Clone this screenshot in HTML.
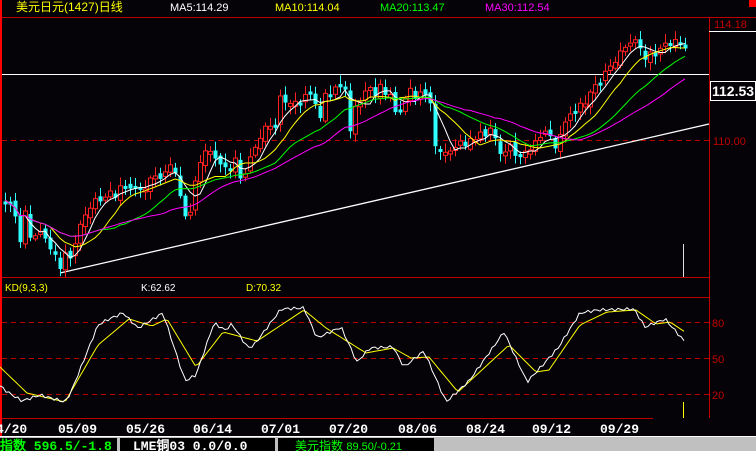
<!DOCTYPE html>
<html><head><meta charset="utf-8">
<style>
html,body{margin:0;padding:0;background:#050308;width:756px;height:451px;overflow:hidden}
svg{display:block}
text{font-family:"Liberation Sans","WenQuanYi Zen Hei",sans-serif}
.mono{font-family:"Liberation Mono","WenQuanYi Zen Hei",monospace;font-weight:bold}
</style></head><body>
<svg id="s" width="756" height="451" viewBox="0 0 756 451" xmlns="http://www.w3.org/2000/svg">
<rect width="756" height="451" fill="#050308"/>
<rect x="0" y="0" width="2" height="436" fill="#ff0000"/>
<text x="16" y="11" fill="#ffff00" font-size="12">美元日元(1427)日线</text>
<text x="170" y="11" fill="#ffffff" font-size="11">MA5:114.29</text>
<text x="275" y="11" fill="#ffff00" font-size="11">MA10:114.04</text>
<text x="380" y="11" fill="#00ff00" font-size="11">MA20:113.47</text>
<text x="485" y="11" fill="#ff00ff" font-size="11">MA30:112.54</text>
<rect x="749" y="0" width="7" height="7" fill="#ff0000"/>
<line x1="2" y1="17.5" x2="756" y2="17.5" stroke="#c00000"/>
<line x1="709.5" y1="17" x2="709.5" y2="418" stroke="#c00000"/>
<text x="714" y="28" fill="#c00000" font-size="11">114.18</text>
<line x1="709" y1="31.5" x2="756" y2="31.5" stroke="#fff"/>
<line x1="2" y1="74.5" x2="709" y2="74.5" stroke="#fff"/>
<rect x="710.5" y="81.5" width="45" height="19" fill="none" stroke="#fff"/>
<text x="712" y="96" fill="#fff" font-size="14" font-weight="bold">112.53</text>
<line x1="2" y1="140.5" x2="709" y2="140.5" stroke="#c00000" stroke-dasharray="5,4"/>
<text x="713" y="145" fill="#c00000" font-size="11">110.00</text>
<line x1="60" y1="273" x2="709" y2="124" stroke="#fff" stroke-width="1.3"/>
<line x1="683.5" y1="244" x2="683.5" y2="278" stroke="#ddd"/>
<g id="candles"></g>
<g id="mas"></g>
<line x1="2" y1="277.5" x2="709" y2="277.5" stroke="#c00000"/>
<line x1="2" y1="297.5" x2="709" y2="297.5" stroke="#c00000"/>
<text x="5" y="291" fill="#ffff00" font-size="10">KD(9,3,3)</text>
<text x="141" y="291" fill="#fff" font-size="10">K:62.62</text>
<text x="246" y="291" fill="#ffff00" font-size="10">D:70.32</text>
<line x1="2" y1="322.5" x2="709" y2="322.5" stroke="#c00000" stroke-dasharray="5,4"/>
<line x1="2" y1="358.5" x2="709" y2="358.5" stroke="#c00000" stroke-dasharray="5,4"/>
<line x1="2" y1="394.5" x2="709" y2="394.5" stroke="#c00000" stroke-dasharray="5,4"/>
<text x="712" y="327" fill="#c00000" font-size="11">80</text>
<text x="712" y="363" fill="#c00000" font-size="11">50</text>
<text x="712" y="399" fill="#c00000" font-size="11">20</text>
<line x1="683.5" y1="402" x2="683.5" y2="418" stroke="#ffff00"/>
<polyline id="kd" fill="none" stroke="#ffff00" stroke-width="1"/>
<polyline id="kk" fill="none" stroke="#fff" stroke-width="1"/>
<line x1="2" y1="418.5" x2="653" y2="418.5" stroke="#c00000"/>
<g fill="#fff" font-size="13">
<text x="-4" y="433" class="mono">4/20</text>
<text x="58" y="433" class="mono">05/09</text>
<text x="126" y="433" class="mono">05/26</text>
<text x="193" y="433" class="mono">06/14</text>
<text x="261" y="433" class="mono">07/01</text>
<text x="329" y="433" class="mono">07/20</text>
<text x="398" y="433" class="mono">08/06</text>
<text x="466" y="433" class="mono">08/24</text>
<text x="532" y="433" class="mono">09/12</text>
<text x="600" y="433" class="mono">09/29</text>
</g>
<rect x="0" y="436" width="756" height="15" fill="#c0c0c0"/>
<line x1="0" y1="436.5" x2="756" y2="436.5" stroke="#fff"/>
<rect x="0" y="438" width="117" height="13" fill="#000"/>
<rect x="120" y="438" width="155" height="13" fill="#000"/>
<rect x="278" y="438" width="156" height="13" fill="#000"/>
<text x="0" y="450" fill="#00ff00" font-size="13" class="mono">指数 596.5/-1.8</text>
<text x="133" y="450" fill="#fff" font-size="13" class="mono">LME铜03  0.0/0.0</text>
<text x="295" y="450" fill="#00ff00" font-size="12">美元指数 <tspan font-size="11">89.50/-0.21</tspan></text>
</svg>
<script>
(function(){
var P=[[5,200],[15,215],[20,240],[25,215],[30,235],[45,235],[50,250],[60,265],[65,255],[70,260],[75,240],[85,215],[90,205],[100,200],[105,195],[115,195],[120,185],[125,190],[130,185],[140,190],[150,180],[160,175],[165,175],[170,165],[175,170],[180,200],[185,215],[190,210],[195,185],[200,160],[205,150],[210,155],[215,155],[220,165],[225,170],[230,165],[235,160],[240,180],[250,160],[260,135],[265,130],[270,125],[275,125],[280,100],[285,100],[295,105],[305,95],[315,100],[320,120],[325,95],[335,90],[345,85],[350,135],[355,105],[360,100],[365,95],[370,85],[375,95],[380,88],[390,95],[395,115],[405,100],[410,90],[415,95],[425,95],[430,100],[435,150],[440,150],[445,150],[450,155],[455,145],[460,140],[465,150],[470,135],[475,140],[480,135],[490,130],[495,140],[500,150],[505,155],[510,145],[520,160],[525,150],[535,145],[540,135],[545,130],[550,140],[555,145],[560,135],[565,125],[570,110],[575,115],[580,105],[590,95],[595,85],[600,80],[605,75],[610,65],[615,60],[620,55],[625,45],[630,42],[640,45],[645,60],[650,55],[660,50],[665,45],[670,40],[680,45],[685,45]];
function interp(A,x){for(var i=1;i<A.length;i++){if(x<=A[i][0]){var a=A[i-1],b=A[i];return a[1]+(b[1]-a[1])*(x-a[0])/(b[0]-a[0]);}}return A[A.length-1][1];}
var NS="http://www.w3.org/2000/svg";
function el(t,at,p){var e=document.createElementNS(NS,t);for(var k in at)e.setAttribute(k,at[k]);p.appendChild(e);return e;}
var cg=document.getElementById('candles');
var closes=[],xs=[];var prev=200;
for(var x=5;x<=685;x+=5){var base=interp(P,x);var c=base+Math.sin(x*1.7)*4;closes.push(base);xs.push(x);
 var o=prev+Math.cos(x*2.3)*3;var tp=Math.min(o,c),bt=Math.max(o,c);if(bt-tp<3)bt=tp+3;
 var hi=tp-2-Math.abs(Math.sin(x*0.9))*7,lo=bt+2+Math.abs(Math.cos(x*1.3))*6;
 var up=c<o;var col=up?'#ff2020':'#30ffff';
 el('line',{x1:x+.5,y1:hi,x2:x+.5,y2:lo,stroke:col},cg);
 if(up)el('rect',{x:x-1.5,y:tp,width:4,height:bt-tp,fill:'#050308',stroke:col,'stroke-width':1},cg);
 else el('rect',{x:x-1.5,y:tp,width:4,height:bt-tp,fill:col},cg);
 prev=c;}
var mg=document.getElementById('mas');
[[5,'#fff'],[10,'#ffff00'],[20,'#00ff00'],[30,'#ff00ff']].forEach(function(m){var pts=[];
 for(var i=0;i<closes.length;i++){var s=0,n=0;for(var j=Math.max(0,i-m[0]+1);j<=i;j++){s+=closes[j];n++;}
 var v=s/n;pts.push(xs[i]+','+v.toFixed(1));}
 el('polyline',{points:pts.join(' '),fill:'none',stroke:m[1]},mg);});
var K=[[0,386],[9,393],[22,401],[40,395],[65,402],[71,392],[98,325],[107,320],[123,313],[138,328],[163,313],[185,381],[196,375],[214,323],[225,330],[232,324],[248,348],[254,345],[281,309],[304,308],[317,338],[341,327],[357,362],[370,348],[393,347],[404,367],[424,351],[446,402],[469,381],[504,332],[527,382],[540,368],[558,348],[580,313],[598,310],[634,309],[645,327],[665,319],[685,342]];
var D=[[0,367],[27,393],[65,402],[98,345],[129,319],[152,326],[167,319],[196,367],[223,332],[257,341],[304,310],[326,328],[366,353],[393,348],[411,358],[429,357],[458,392],[509,345],[536,372],[549,370],[580,325],[607,312],[636,310],[656,324],[670,322],[685,332]];
function pl(A,j){var out=[];for(var x=0;x<=685;x+=3){var y=interp(A,x)+(j?Math.sin(x*1.3)*1.5:0);out.push(x+','+y.toFixed(1));}return out.join(' ');}
document.getElementById('kk').setAttribute('points',pl(K,true));
document.getElementById('kd').setAttribute('points',pl(D,false));
})();
</script>
</body></html>
